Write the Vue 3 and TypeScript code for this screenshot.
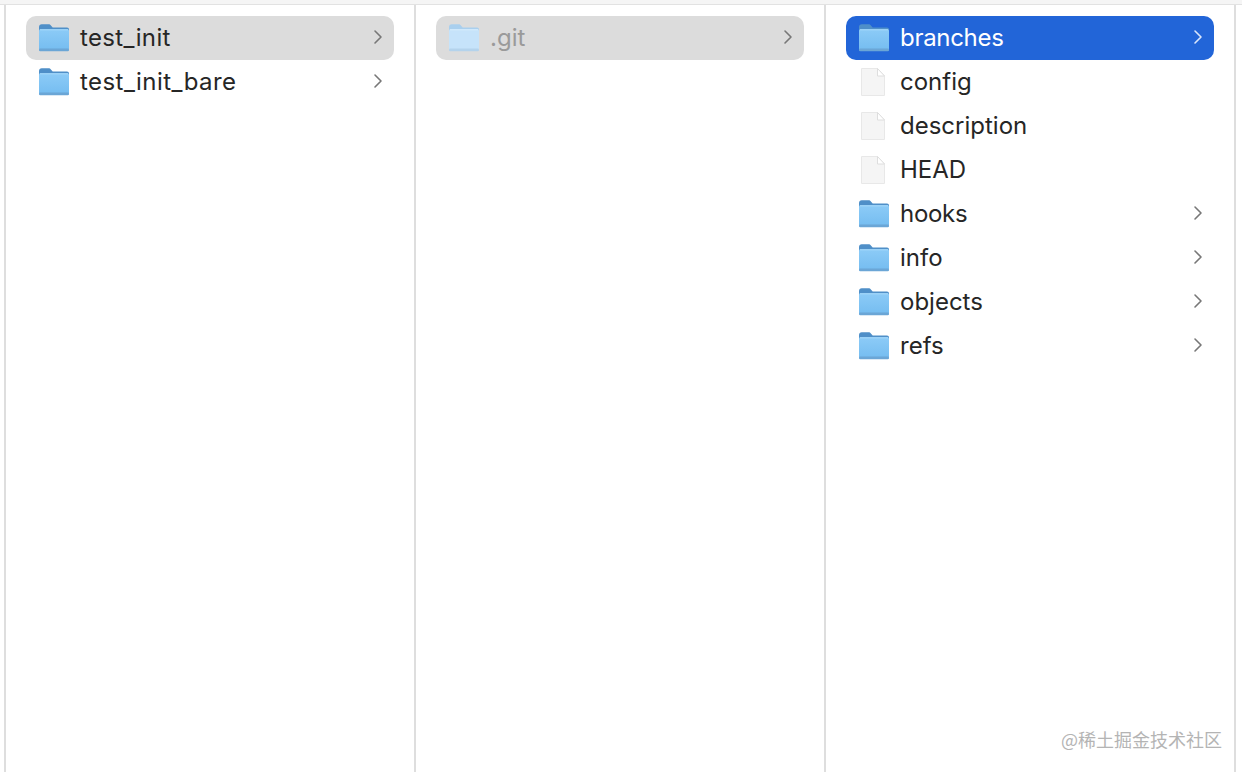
<script setup lang="ts">
type Item = { name: string; kind: 'folder' | 'file'; state?: 'gray' | 'blue'; dim?: boolean; fit?: 'wide' | 'wider' | 'tight' }
const columns: Item[][] = [
  [
    { name: 'test_init', kind: 'folder', state: 'gray', fit: 'wide' },
    { name: 'test_init_bare', kind: 'folder', fit: 'wider' },
  ],
  [{ name: '.git', kind: 'folder', state: 'gray', dim: true }],
  [
    { name: 'branches', kind: 'folder', state: 'blue', fit: 'tight' },
    { name: 'config', kind: 'file' },
    { name: 'description', kind: 'file' },
    { name: 'HEAD', kind: 'file' },
    { name: 'hooks', kind: 'folder', fit: 'tight' },
    { name: 'info', kind: 'folder' },
    { name: 'objects', kind: 'folder' },
    { name: 'refs', kind: 'folder' },
  ],
]
</script>

<template>
  <div class="finder">
    <div class="topband"></div>
    <div class="columns">
      <section v-for="(col, c) in columns" :key="c" class="column">
        <div
          v-for="item in col"
          :key="item.name"
          class="row"
          :class="[item.state, { dim: item.dim }]"
        >
          <svg v-if="item.kind === 'folder'" class="icon" viewBox="0 0 32 28" width="32" height="28">
            <defs>
              <linearGradient id="folderFront" x1="0" y1="0" x2="0" y2="1">
                <stop offset="0" stop-color="#8ccbf7" />
                <stop offset="1" stop-color="#74bcf0" />
              </linearGradient>
            </defs>
            <path class="back" d="M1 3.2C1 1.3 2 .3 3.8.3h6.6c1.2 0 1.9.5 2.7 1.4l1.6 1.8H29c1.2 0 2 .8 2 2v4H1z" fill="#4f8fc8" />
            <path class="front" d="M1 6.8c0-.9.6-1.5 1.5-1.5h27c.9 0 1.5.6 1.5 1.5V25c0 1.2-.8 2-2 2H3c-1.2 0-2-.8-2-2z" fill="url(#folderFront)" />
            <rect class="lip" x="1" y="24.6" width="30" height="2.6" rx="1.3" fill="#6ba6d6" />
            <rect class="shine" x="2" y="5.3" width="28" height="1" fill="#a8dafb" />
          </svg>
          <svg v-else class="icon" viewBox="0 0 30 30" width="30" height="30">
            <path d="M3.5 1.5h16l7 7.5v19.5h-23z" fill="#f5f5f5" stroke="#e8e8e8" stroke-width="1" />
            <path d="M19.5 1.5v7.5h7z" fill="#ffffff" stroke="#dedede" stroke-width="1" />
          </svg>
          <span class="label" :class="item.fit">{{ item.name }}</span>
          <svg v-if="item.kind === 'folder'" class="chev" viewBox="0 0 12 16" width="12" height="16">
            <path d="M3 2l6 6-6 6" fill="none" stroke="currentColor" stroke-width="1.6" stroke-linecap="round" stroke-linejoin="round" />
          </svg>
        </div>
      </section>
    </div>
    <div class="mark">@稀土掘金技术社区</div>
  </div>
</template>

<style scoped>
.finder {
  position: relative;
  width: 1242px;
  height: 772px;
  overflow: hidden;
  background: #fff;
  font-family: Inter, "Noto Sans", sans-serif;
}
.topband {
  height: 4px;
  background: #f5f5f5;
}
.columns {
  display: flex;
  height: 768px;
  padding-left: 4px;
  border-top: 1px solid #e2e2e2;
  box-sizing: border-box;
}
.column {
  width: 410px;
  box-sizing: border-box;
  flex: none;
  border-left: 2px solid #dedede;
  padding: 11px 20px 0;
}
.column:last-child {
  width: 412px;
  border-right: 2px solid #dedede;
}
.row {
  display: flex;
  align-items: center;
  height: 44px;
  padding: 0 10px 0 12px;
  border-radius: 10px;
  color: #262626;
  font-size: 24px;
}
.row.gray {
  background: #dcdcdc;
}
.row.blue {
  background: #2265d8;
  color: #fff;
}
.icon {
  flex: none;
  width: 30px;
  margin-right: 12px;
  overflow: visible;
}
svg.icon[width="32"] {
  width: 32px;
  margin-right: 10px;
}
.label {
  flex: 1;
  position: relative;
  top: -1px;
}
.label.wide {
  letter-spacing: 0.36px;
}
.label.wider {
  letter-spacing: 0.44px;
}
.label.tight {
  letter-spacing: -0.3px;
}
.dim .label {
  color: #9a9a9a;
}
.dim .back {
  fill: #a9cfee;
}
.dim .front {
  fill: #c6e3fa;
}
.dim .lip {
  fill: #b4d3ec;
}
.dim .shine {
  fill: #d8edfc;
}
.chev {
  flex: none;
  color: #777;
  position: relative;
  top: -1px;
}
.blue .chev {
  color: #dbe6fa;
}
.mark {
  position: absolute;
  right: 20px;
  bottom: 20px;
  font-family: "Noto Sans CJK SC", sans-serif;
  font-size: 18px;
  color: #b4b4b4;
}
</style>
